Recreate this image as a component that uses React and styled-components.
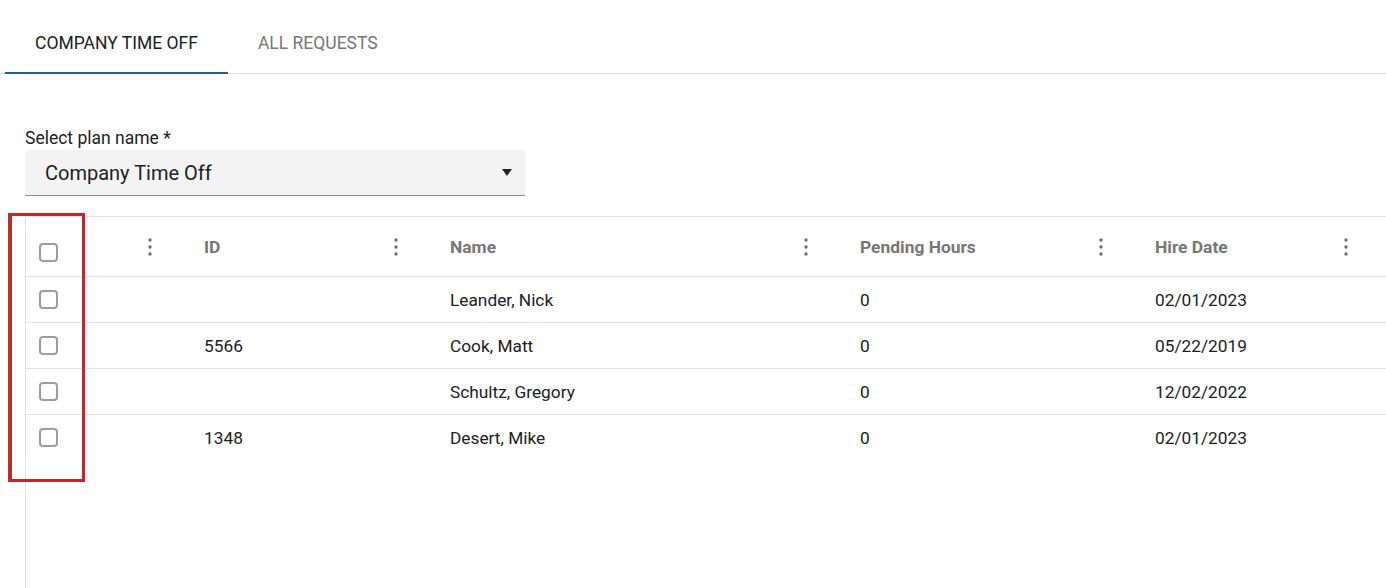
import styled, { createGlobalStyle } from "styled-components";

const GlobalStyle = createGlobalStyle`
	html, body {
		margin: 0;
		padding: 0;
		background: #fff;
	}
	body {
		font-family: Roboto, "Liberation Sans", Arial, sans-serif;
		color: #212121;
		overflow: hidden;
	}
`;

const columns = [
	{ key: "select", title: "" },
	{ key: "id", title: "ID" },
	{ key: "name", title: "Name" },
	{ key: "pending", title: "Pending Hours" },
	{ key: "hireDate", title: "Hire Date" },
];

const employees = [
	{ id: "", name: "Leander, Nick", pending: "0", hireDate: "02/01/2023" },
	{ id: "5566", name: "Cook, Matt", pending: "0", hireDate: "05/22/2019" },
	{ id: "", name: "Schultz, Gregory", pending: "0", hireDate: "12/02/2022" },
	{ id: "1348", name: "Desert, Mike", pending: "0", hireDate: "02/01/2023" },
];

const Page = styled.div`
	display: flex;
	flex-direction: column;
	height: 100vh;
`;

const TabBar = styled.div`
	display: flex;
	padding: 14px 0 0 5px;
	border-bottom: 1px solid #dddddd;
`;

const Tab = styled.div`
	display: flex;
	align-items: center;
	height: 58px;
	padding: 0 30px;
	margin-bottom: -1px;
	font-size: 17.5px;
	text-transform: uppercase;
	color: ${({ $active }) => ($active ? "#212121" : "#777777")};
	border-bottom: 2px solid ${({ $active }) => ($active ? "#2b5c8e" : "transparent")};
	cursor: pointer;
`;

const Content = styled.div`
	display: flex;
	flex-direction: column;
	flex: 1;
	padding-left: 25px;
`;

const Field = styled.div`
	display: flex;
	flex-direction: column;
	gap: 1px;
	width: 500px;
	margin-top: 54px;
`;

const Label = styled.label`
	font-size: 17.5px;
	line-height: 21px;
	color: #212121;
`;

const SelectBox = styled.div`
	display: flex;
	align-items: center;
	justify-content: space-between;
	height: 45px;
	padding: 0 13px 0 20px;
	background: #f3f3f3;
	border-radius: 4px 4px 0 0;
	border-bottom: 1px solid #8d8d8d;
	font-size: 20px;
	color: #212121;
`;

const Grid = styled.div`
	position: relative;
	flex: 1;
	margin-top: 20px;
	border-top: 1px solid #e2e2e2;
	border-left: 1px solid #e2e2e2;
`;

const Row = styled.div`
	display: grid;
	grid-template-columns: 164px 246px 410px 295px 1fr;
	height: ${({ $header }) => ($header ? "59px" : "45px")};
	border-bottom: ${({ $last }) => ($last ? "none" : "1px solid #e2e2e2")};
`;

const HeaderCell = styled.div`
	display: flex;
	align-items: center;
	justify-content: space-between;
	padding: 0 28px 0 14px;
	font-size: 17.4px;
	font-weight: 700;
	color: #777777;
`;

const Cell = styled.div`
	display: flex;
	align-items: center;
	padding-left: 14px;
	font-size: 17.3px;
	color: #212121;
`;

const Checkbox = styled.span`
	display: inline-block;
	box-sizing: border-box;
	width: 19px;
	height: 19px;
	margin-left: -1px;
	border: 2px solid #9d9d9d;
	border-radius: 4px;
	margin-top: ${({ $offset }) => $offset || 0}px;
`;

const MenuButton = styled.span`
	display: flex;
	align-items: center;
	justify-content: center;
	width: 24px;
	height: 24px;
`;

const Highlight = styled.div`
	position: absolute;
	left: -18px;
	top: -4px;
	width: 77px;
	height: 269px;
	box-sizing: border-box;
	border: 3px solid #c1272d;
	border-left-width: 4px;
	pointer-events: none;
`;

const Kebab = () => (
	<MenuButton>
		<svg width="6" height="20" viewBox="0 0 6 20">
			<circle cx="3" cy="3" r="1.7" fill="#6f6f6f" />
			<circle cx="3" cy="10" r="1.7" fill="#6f6f6f" />
			<circle cx="3" cy="17" r="1.7" fill="#6f6f6f" />
		</svg>
	</MenuButton>
);

const Caret = () => (
	<svg width="10" height="7" viewBox="0 0 10 7">
		<path d="M0 0h10L5 7z" fill="#222" />
	</svg>
);

export default function App() {
	return (
		<Page>
			<GlobalStyle />
			<TabBar>
				<Tab $active>Company Time Off</Tab>
				<Tab>All Requests</Tab>
			</TabBar>
			<Content>
				<Field>
					<Label>Select plan name *</Label>
					<SelectBox>
						<span>Company Time Off</span>
						<Caret />
					</SelectBox>
				</Field>
				<Grid>
					<Row $header>
						{columns.map(({ key, title }) => (
							<HeaderCell key={key}>
								{key === "select" ? <Checkbox $offset={12} /> : <span>{title}</span>}
								<Kebab />
							</HeaderCell>
						))}
					</Row>
					{employees.map((emp, i) => (
						<Row key={emp.name} $last={i === employees.length - 1}>
							<Cell>
								<Checkbox />
							</Cell>
							<Cell>{emp.id}</Cell>
							<Cell>{emp.name}</Cell>
							<Cell>{emp.pending}</Cell>
							<Cell>{emp.hireDate}</Cell>
						</Row>
					))}
					<Highlight />
				</Grid>
			</Content>
		</Page>
	);
}
